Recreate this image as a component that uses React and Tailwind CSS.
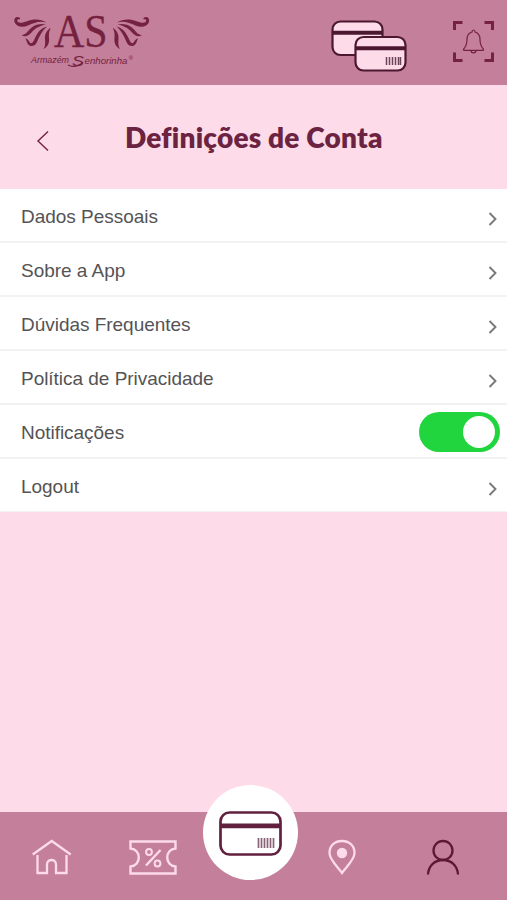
import { useState } from "react";

const menuItems = [
  { id: "dados", label: "Dados Pessoais" },
  { id: "sobre", label: "Sobre a App" },
  { id: "duvidas", label: "Dúvidas Frequentes" },
  { id: "politica", label: "Política de Privacidade" },
  { id: "notificacoes", label: "Notificações", toggle: true },
  { id: "logout", label: "Logout" },
];

const Wing = () => (
  <g fill="#74223f">
    <path d="M20 18C16.500 15.500 13.500 18.500 14.500 22C16 26.500 22 28 28 25.500C34 23 39 20.500 46.500 22.500C41 18.800 33 18.800 27 21.300C22 23.200 18 23.500 17.300 20.800C17 19.300 18.500 18.800 20 19.500Z" />
    <path d="M21.500 35C24.500 37.700 28.500 36 31.500 32.500C35 28.500 39 26 46 24.500C38.500 22.500 32.500 26 29 30C27 32.500 25 35 21.500 35Z" />
    <path d="M25.500 38.500C27 42 27.500 45.500 31 46C36.500 46.300 37 41 39.500 36.500C41.500 32.800 43.500 29.500 47 26.500C40.500 28 37.500 33 35.500 37C33.500 41 32.500 44 30.500 43C29 42 28.500 39 25.500 38.500Z" />
    <path d="M43.500 49C48.500 46.500 49.500 42 49 37.500C48.700 34 49 31 50.800 27.800C46.500 30.500 44.500 34.500 45 39C45.300 42.500 45.500 46 43.500 49Z" />
  </g>
);

const Logo = () => (
  <svg width="142" height="64" viewBox="12 8 142 64" aria-label="Armazém Senhorinha">
    <Wing />
    <g transform="translate(163.500 0) scale(-1 1)">
      <Wing />
    </g>
    <text x="54" y="46.500" fontSize="47" textLength="53.500" lengthAdjust="spacingAndGlyphs" fontFamily="'Liberation Serif', serif" fill="#74223f" stroke="#74223f" strokeWidth="0.300">AS</text>
    <g fontFamily="'Liberation Sans', sans-serif" fontStyle="italic" fill="#74223f">
      <text x="31" y="62.500" fontSize="8.500" textLength="38" lengthAdjust="spacingAndGlyphs">Armazém</text>
      <text x="72" y="66" fontSize="14" textLength="12" lengthAdjust="spacingAndGlyphs">S</text>
      <text x="84.500" y="63.500" fontSize="8.500" textLength="43" lengthAdjust="spacingAndGlyphs">enhorinha</text>
      <text x="128.500" y="59.500" fontSize="6">®</text>
    </g>
    <path d="M68 65C72 67.500 79 66.500 83 62.500" fill="none" stroke="#74223f" strokeWidth="1.200" />
  </svg>
);

const CardsIcon = () => (
  <svg width="76" height="53" viewBox="0 0 76 53" fill="none">
    <rect x="1.500" y="2.500" width="50" height="33.500" rx="8" fill="#fddbe8" stroke="#4c1830" strokeWidth="2.200" />
    <path d="M2 13.800H51" stroke="#4c1830" strokeWidth="4" />
    <rect x="24.500" y="18" width="50" height="33.500" rx="8" fill="#fddbe8" stroke="#4c1830" strokeWidth="2.200" />
    <path d="M25 29.200H74" stroke="#4c1830" strokeWidth="4" />
    <path d="M55.500 38V46M58.500 38V46M61.500 38V46M64.500 38V46M67.500 38V46M69.500 38V46" stroke="#6b4457" strokeWidth="1.500" />
  </svg>
);

const BellIcon = () => (
  <svg width="41" height="41" viewBox="0 0 41 41" fill="none" stroke="#74223f">
    <path d="M1.500 9V1.500H9.500M31.500 1.500H39.500V9M39.500 31.500V39.500H31.500M9.500 39.500H1.500V31.500" strokeWidth="3" />
    <path d="M19 11C19 8.300 22 8.300 22 11C25.500 12 27 14.800 27 18.500C27 23 28 25.500 30.300 28C30.800 28.700 30.500 29.300 29.700 29.300H11.300C10.500 29.300 10.200 28.700 10.700 28C13 25.500 14 23 14 18.500C14 14.800 15.500 12 19 11Z" strokeWidth="1.200" />
    <path d="M18 29.800C18.500 32.500 22.500 32.500 23 29.800" strokeWidth="1.400" />
  </svg>
);

const HomeIcon = () => (
  <svg width="40" height="36" viewBox="0 0 40 36" fill="none" stroke="#fddbe8" strokeWidth="2.300">
    <path d="M.7 15.500L19.700 2L38.700 15.500" />
    <path d="M5.500 16V34H15V25.500C15 19.500 24 19.500 24 25.500V34H34.500V16" />
  </svg>
);

const TicketIcon = () => (
  <svg width="48" height="35" viewBox="0 0 48 35" fill="none" stroke="#fddbe8" strokeWidth="2.400">
    <path d="M1.500 1.500H46.500V8.500C35.500 9.500 35.500 25.500 46.500 26.500V33.500H1.500V26.500C12.500 25.500 12.500 9.500 1.500 8.500Z" />
    <path d="M31.500 10L17 25.500" />
    <circle cx="20" cy="12" r="2.900" strokeWidth="2" />
    <circle cx="28.500" cy="23.500" r="2.900" strokeWidth="2" />
  </svg>
);

const PinIcon = () => (
  <svg width="28" height="36" viewBox="0 0 28 36" fill="none">
    <path d="M14 34C10.500 28.500 1.500 21 1.500 14C1.500 6.500 7 2 14 2S26.500 6.500 26.500 14C26.500 21 17.500 28.500 14 34Z" stroke="#fddbe8" strokeWidth="2.300" />
    <circle cx="14" cy="14" r="5.200" fill="#fddbe8" />
  </svg>
);

const UserIcon = () => (
  <svg width="34" height="36" viewBox="0 0 34 36" fill="none" stroke="#5c1835" strokeWidth="2.300">
    <circle cx="17" cy="11.500" r="9.500" />
    <path d="M2 35.500C2.500 26.500 9 21 17 21S31.500 26.500 32 35.500" />
  </svg>
);

const CardIcon = () => (
  <svg width="63" height="45" viewBox="0 0 63 45" fill="none" stroke="#61203e">
    <rect x="1.500" y="1.500" width="60" height="42" rx="9" strokeWidth="2.700" />
    <path d="M2 14.800H61" strokeWidth="4.800" />
    <path d="M39.500 27V37M42.500 27V37M45.500 27V37M48.500 27V37M51.500 27V37M54.500 27V37" stroke="#8a6276" strokeWidth="1.700" />
  </svg>
);

const App = () => {
  const [notifications, setNotifications] = useState(true);

  return (
    <div className="flex flex-col w-full h-screen overflow-hidden bg-[#fddbe8] font-['Liberation_Sans',sans-serif]">
      <header className="flex items-start shrink-0 h-[85px] bg-[#c47f9b] pl-3 pr-[13px]">
        <div className="mt-2"><Logo /></div>
        <button className="ml-auto mt-[19px]" aria-label="Cartões"><CardsIcon /></button>
        <button className="ml-[46px] mt-[21px]" aria-label="Alertas"><BellIcon /></button>
      </header>

      <div className="flex items-center shrink-0 h-[104px] pl-9">
        <button className="mt-2" aria-label="Voltar">
          <svg width="14" height="22" viewBox="0 0 14 22" fill="none" stroke="#74223f" strokeWidth="1.400">
            <path d="M12 1.500L2 11L12 20.500" />
          </svg>
        </button>
        <h1 className="ml-[75px] font-['Lato',sans-serif] font-extrabold text-[28px] leading-9 tracking-[0.2px] whitespace-nowrap text-[#6b2341]">Definições de Conta</h1>
      </div>

      <ul className="shrink-0 bg-white">
        {menuItems.map((item) => (
          <li key={item.id} className="flex items-center justify-between h-[54px] last:h-[53px] pl-[21px] pr-[7px] border-b-2 last:border-b border-[#f3f2f3]">
            <span className="text-[19px] leading-6 mt-[3px] tracking-[-0.03px] text-[#555355]">{item.label}</span>
            {item.toggle ? (
              <button
                role="switch"
                aria-checked={notifications}
                aria-label={item.label}
                onClick={() => setNotifications(!notifications)}
                className={`flex items-center w-[81px] h-10 mt-[2px] px-[5px] rounded-full cursor-pointer ${notifications ? "justify-end bg-[#21d53e]" : "justify-start bg-gray-300"}`}
              >
                <span className="w-8 h-8 rounded-full bg-white"></span>
              </button>
            ) : (
              <svg className="mt-[7px] mr-[2px]" width="10" height="14" viewBox="0 0 10 14" fill="none" stroke="#79777a" strokeWidth="1.900">
                <path d="M1.500 1L7.500 7L1.500 13" />
              </svg>
            )}
          </li>
        ))}
      </ul>

      <nav className="relative flex items-start shrink-0 h-[88px] mt-auto pt-[27px] pl-8 bg-[#c47f9b]">
        <button aria-label="Início"><HomeIcon /></button>
        <button className="ml-[57px] mt-[1px]" aria-label="Promoções"><TicketIcon /></button>
        <button className="ml-[151px]" aria-label="Lojas"><PinIcon /></button>
        <button className="ml-[70px]" aria-label="Conta"><UserIcon /></button>
        <button className="absolute left-[203px] top-[-27px] flex items-center justify-center w-[95px] h-[95px] rounded-full bg-white" aria-label="Cartão">
          <div className="mt-[2px]"><CardIcon /></div>
        </button>
      </nav>
    </div>
  );
};

export default App;
